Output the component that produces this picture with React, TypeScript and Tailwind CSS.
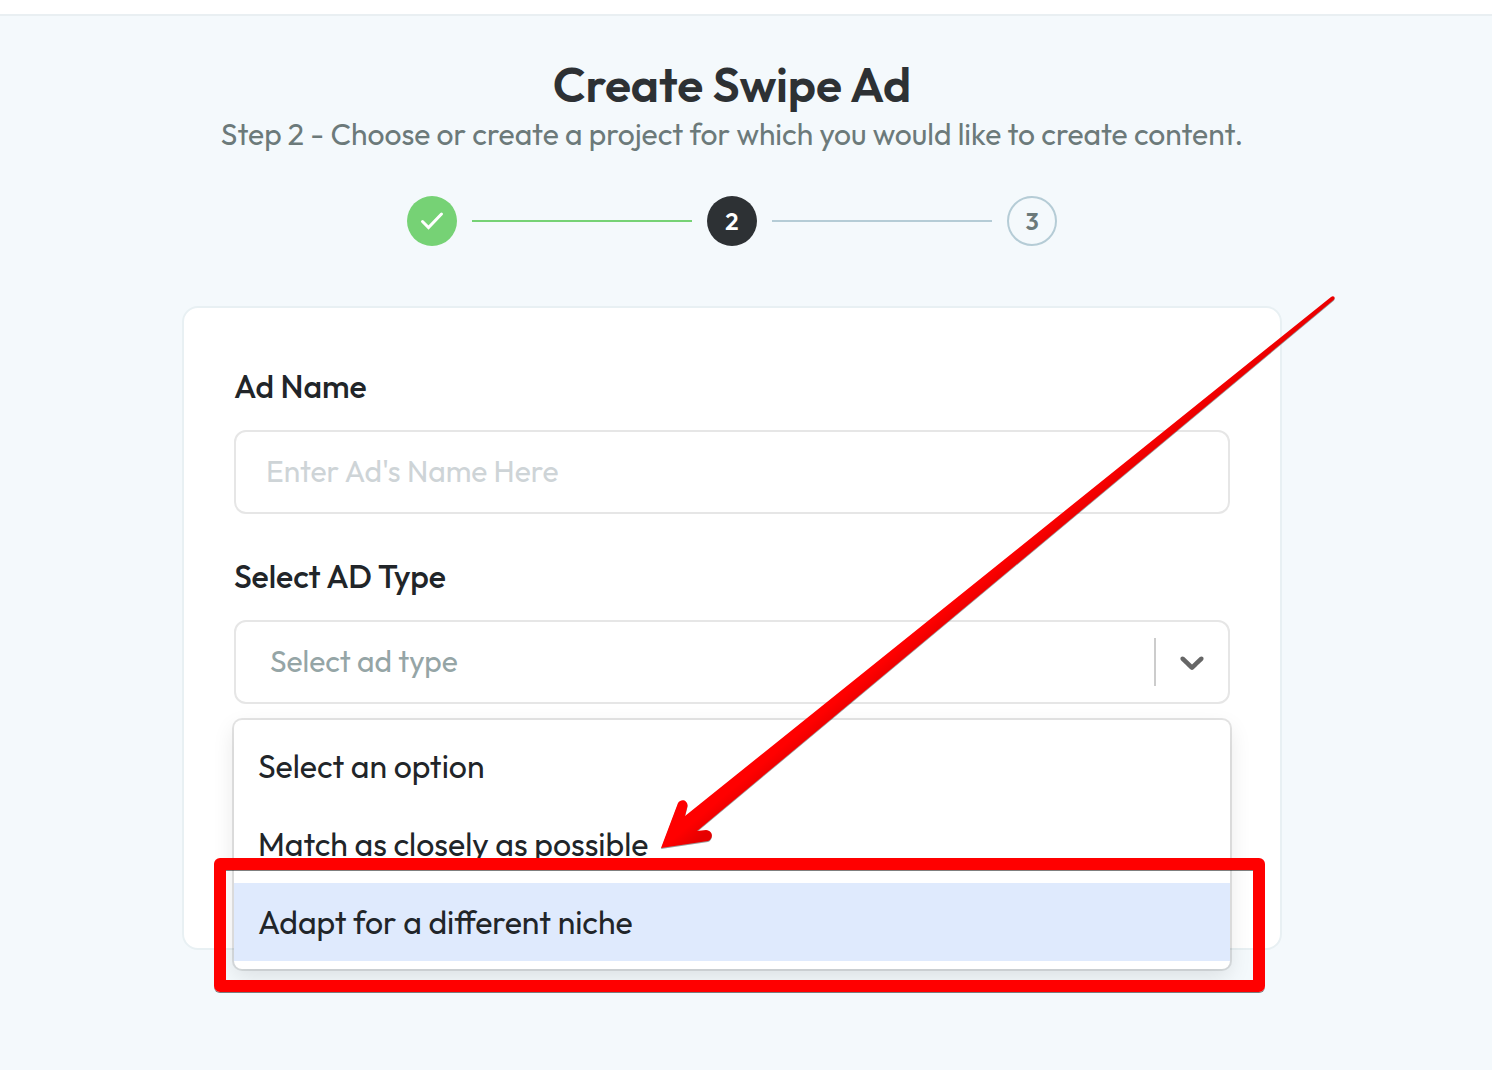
import { useState } from "react";

type Option = { value: string; label: string };

const AD_TYPES: Option[] = [
  { value: "", label: "Select an option" },
  { value: "match", label: "Match as closely as possible" },
  { value: "adapt", label: "Adapt for a different niche" },
];

export default function App() {
  const [name, setName] = useState("");
  const [adType, setAdType] = useState("");
  const [active, setActive] = useState("adapt");

  return (
    <div className="min-h-screen overflow-x-hidden bg-[#f4f9fc] font-['Outfit','Lato',sans-serif] text-[#212529]">
      <header className="h-4 border-b-2 border-[#e9eff2] bg-white" />

      <main className="flex flex-col items-center pt-[38px] pr-7 pb-16">
        <h1 className="text-center text-5xl leading-[60px] font-semibold text-[#2d3134]">Create Swipe Ad</h1>
        <p className="text-center text-3xl leading-10 text-[#6c7a7a]">
          Step 2 - Choose or create a project for which you would like to create content.
        </p>

        <Steps />

        <form className="relative mt-[60px] w-full max-w-[1100px] rounded-2xl border-2 border-[#e8f0f3] bg-white px-[50px] pt-[58px] pb-[244px]">
          <label htmlFor="ad-name" className="mb-6 block text-[32px] leading-10 font-medium">Ad Name</label>
          <input
            id="ad-name"
            type="text"
            value={name}
            onChange={(e) => setName(e.target.value)}
            placeholder="Enter Ad's Name Here"
            className="block h-[84px] w-full rounded-xl border-2 border-[#e6e6e6] bg-white px-[30px] pb-[2px] text-3xl outline-none placeholder:text-[#ced4d7]"
          />

          <label htmlFor="ad-type" className="mt-[42px] mb-6 block text-[32px] leading-10 font-medium">Select AD Type</label>
          <div className="relative">
            <select
              id="ad-type"
              value={adType}
              onChange={(e) => setAdType(e.target.value)}
              className="block h-[84px] w-full appearance-none rounded-xl border-2 border-[#e6e6e6] bg-white px-[34px] pb-[2px] text-3xl text-[#95a5a6] outline-none"
            >
              <option value="">Select ad type</option>
              {AD_TYPES.slice(1).map((o) => (
                <option key={o.value} value={o.value}>{o.label}</option>
              ))}
            </select>
            <div className="pointer-events-none absolute inset-y-0 right-0 flex items-center gap-4 pr-[18px]">
              <span className="h-12 w-[2px] bg-[#cccccc]" />
              <svg width="40" height="40" viewBox="0 0 20 20" fill="#666666" aria-hidden="true">
                <path d="M4.516 7.548c0.436-0.446 1.043-0.481 1.576 0l3.908 3.747 3.908-3.747c0.533-0.481 1.141-0.446 1.574 0 0.436 0.445 0.408 1.197 0 1.615-0.406 0.418-4.695 4.502-4.695 4.502-0.217 0.223-0.502 0.335-0.787 0.335s-0.57-0.112-0.789-0.335c0 0-4.287-4.084-4.695-4.502s-0.436-1.17 0-1.615z" />
              </svg>
            </div>

            <div className="absolute inset-x-0 top-full mt-4">
              <ul
                role="listbox"
                aria-label="Ad type"
                className="rounded-lg bg-white pt-[7px] pb-2 shadow-[0_0_0_2px_rgba(0,0,0,0.1),0_8px_22px_rgba(0,0,0,0.1)]"
              >
                {AD_TYPES.map((o) => (
                  <li key={o.label} role="option" aria-selected={o.value === active}>
                    <button
                      type="button"
                      onMouseEnter={() => setActive(o.value)}
                      onClick={() => setAdType(o.value)}
                      className={`block h-[78px] w-full px-6 text-left text-[32px] leading-10 ${o.value === active ? "bg-[#dfeafd]" : ""}`}
                    >
                      {o.label}
                    </button>
                  </li>
                ))}
              </ul>
              <div className="pointer-events-none absolute -right-[35px] -bottom-[23px] -left-5 h-[134px] rounded-md border-12 border-[#ff0000] shadow-[0_1px_0_rgba(0,0,0,0.5),inset_0_1px_0_rgba(0,0,0,0.5)]" />
            </div>
          </div>

          <Arrow />
        </form>
      </main>
    </div>
  );
}

function Steps() {
  return (
    <ol className="mt-[42px] flex items-center gap-[15px] text-2xl font-semibold">
      <li className="flex size-[50px] items-center justify-center rounded-full bg-[#76d275] text-white">
        <svg width="24" height="20" viewBox="0 0 24 20" fill="none" stroke="currentColor" strokeWidth="3" aria-label="Done">
          <path d="M2.500 10.500 8.500 16.500 21.500 3" strokeLinecap="round" />
        </svg>
      </li>
      <li aria-hidden="true" className="h-[2px] w-[220px] bg-[#76d275]" />
      <li aria-current="step" className="flex size-[50px] items-center justify-center rounded-full bg-[#2d3134] text-white">2</li>
      <li aria-hidden="true" className="h-[2px] w-[220px] bg-[#b5ccd6]" />
      <li className="flex size-[50px] items-center justify-center rounded-full border-2 border-[#b5ccd6] text-[#6c7a7a]">3</li>
    </ol>
  );
}

// callout pointing at the closest-match option
function Arrow() {
  return (
    <svg
      className="pointer-events-none absolute -top-4 -right-14 drop-shadow-[0_1px_0_rgba(0,0,0,0.4)]"
      width="680"
      height="560"
      viewBox="656 292 680 560"
      aria-hidden="true"
    >
      <defs>
        <linearGradient id="arrow-red" gradientUnits="userSpaceOnUse" x1="986" y1="574" x2="997" y2="587">
          <stop offset="0" stopColor="#ff0000" />
          <stop offset="1" stopColor="#e60000" />
        </linearGradient>
      </defs>
      <path
        d="M661 848 678 803C681 798 688 800 687.500 806L685 816 1331 297C1334 295 1336 298 1333.500 300L697 831 706 830C714 831 713 839 708 841Z"
        fill="url(#arrow-red)"
      />
    </svg>
  );
}
